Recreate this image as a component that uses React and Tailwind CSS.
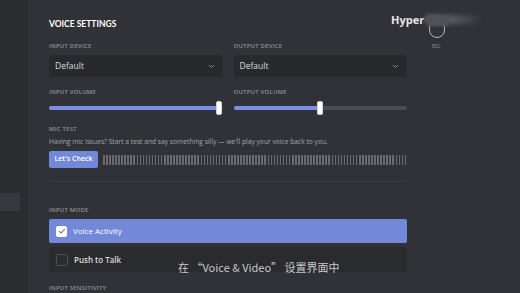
import React from "react";

const font = { fontFamily: '"Open Sans", "Noto Sans", "Noto Sans CJK SC", sans-serif' };

function Label({ children, className = "" }) {
  return (
    <div className={"text-[6px] leading-[8px] font-semibold uppercase tracking-[0.2px] text-[#8e9297] " + className}>
      {children}
    </div>
  );
}

function Dropdown() {
  return (
    <div className="h-[22px] bg-[#27292d] rounded-[2px] flex items-center justify-between pl-[6px] pr-[8px]">
      <span className="text-[8.5px] text-[#dcddde]">Default</span>
      <svg width="7" height="5" viewBox="0 0 7 5" fill="none">
        <path d="M1 1l2.5 2.5L6 1" stroke="#8e9297" strokeWidth="1" />
      </svg>
    </div>
  );
}

function Slider({ pct }) {
  return (
    <div className="relative h-[14px] flex items-center">
      <div className="w-full h-[4px] rounded-full bg-[#4a4d54] overflow-hidden">
        <div className="h-full bg-[#7b8ee0]" style={{ width: pct + "%" }} />
      </div>
      <div
        className="absolute top-0 h-[14px] w-[6px] -ml-[3px] rounded-[2px] bg-white border border-[#cfd1d6]"
        style={{ left: pct + "%" }}
      />
    </div>
  );
}

export default function App() {
  const bars = Array.from({ length: 100 });
  return (
    <div style={font} className="relative w-[520px] h-[293px] overflow-hidden flex bg-[#313237]">
      {/* sidebar */}
      <div className="w-[28px] shrink-0 bg-[#2b2c30] flex flex-col">
        <div className="mt-[193px] h-[18px] w-[20px] bg-[#36383d]" />
      </div>

      {/* main */}
      <div className="w-[379px] shrink-0 pl-[21px] pt-[18px]">
        <div
          className="text-[8.5px] leading-[13px] font-bold text-white"
          style={{ fontFamily: 'Lato, "Open Sans", sans-serif' }}
        >
          VOICE SETTINGS
        </div>

        <div className="mt-[11px] grid grid-cols-2 gap-x-[11px]">
          <div>
            <Label>Input Device</Label>
            <div className="mt-[5px]"><Dropdown /></div>
          </div>
          <div>
            <Label>Output Device</Label>
            <div className="mt-[5px]"><Dropdown /></div>
          </div>
          <div className="mt-[11px]">
            <Label>Input Volume</Label>
            <div className="mt-[5px]"><Slider pct={98} /></div>
          </div>
          <div className="mt-[11px]">
            <Label>Output Volume</Label>
            <div className="mt-[5px]"><Slider pct={50} /></div>
          </div>
        </div>

        <Label className="mt-[10px]">Mic Test</Label>
        <div className="mt-[4px] text-[6.7px] leading-[9px] text-[#a3a6aa] whitespace-nowrap">
          Having mic issues? Start a test and say something silly — we'll play your voice back to you.
        </div>
        <div className="mt-[5px] flex items-center gap-[5px]">
          <div className="h-[17px] w-[49px] shrink-0 bg-[#7289da] rounded-[2px] flex items-center justify-center text-[7px] font-semibold text-white">
            Let's Check
          </div>
          <div className="flex-1 h-[10px] flex justify-between">
            {bars.map((_, i) => (
              <div key={i} className="w-[1.6px] h-full bg-[#686b71]" />
            ))}
          </div>
        </div>

        <div className="mt-[13px] h-px bg-[#3a3c41]" />

        <Label className="mt-[24px]">Input Mode</Label>
        <div className="mt-[5px] h-[24px] bg-[#7289da] rounded-[2px] flex items-center pl-[7px] gap-[6px]">
          <div className="w-[11px] h-[11px] bg-white rounded-[2px] flex items-center justify-center">
            <svg width="8" height="8" viewBox="0 0 8 8" fill="none">
              <path d="M1.3 4.2l1.8 1.8L6.8 2" stroke="#7a5f9a" strokeWidth="1.1" />
            </svg>
          </div>
          <span className="text-[8px] font-medium text-white">Voice Activity</span>
        </div>
        <div className="mt-[4px] h-[25px] bg-[#2a2b2f] rounded-[2px] flex items-center pl-[7px] gap-[6px]">
          <div className="w-[12px] h-[12px] border border-[#4a4c52] rounded-[2px]" />
          <span className="text-[8px] font-semibold text-[#dcddde]">Push to Talk</span>
        </div>

        <Label className="mt-[12px]">Input Sensitivity</Label>
      </div>

      {/* right column */}
      <div className="flex-1 flex flex-col items-start pl-[22px] pt-[20px]">
        <div className="w-[16px] h-[18px] rounded-full border-[1.5px] border-[#b9bbbe]" />
        <div className="mt-[5px] text-[5px] leading-[6px] text-[#8e9297] pl-[3px]">ESC</div>
      </div>

      {/* watermark overlay */}
      <div className="absolute left-[391px] top-[13px] text-[11px] leading-[14px] font-bold text-[#e6e6e6]">Hyper</div>
      <div className="absolute left-[425px] top-[15px] w-[58px] h-[9px] rounded-full bg-gradient-to-r from-[#6a6c71] via-[#55575c] to-transparent blur-[2px]" />
      <div className="absolute left-[427px] top-[16px] w-[22px] h-[10px] bg-[#4f5156] blur-[1px]" />

      {/* subtitle overlay */}
      <div
        className="absolute left-[178px] top-[259px] text-[11px] leading-[16px] text-[#c9c9c9] whitespace-nowrap"
        style={{ fontFamily: '"Noto Sans CJK SC", "Noto Sans", sans-serif' }}
      >
        在 “Voice &amp; Video” 设置界面中
      </div>
    </div>
  );
}
